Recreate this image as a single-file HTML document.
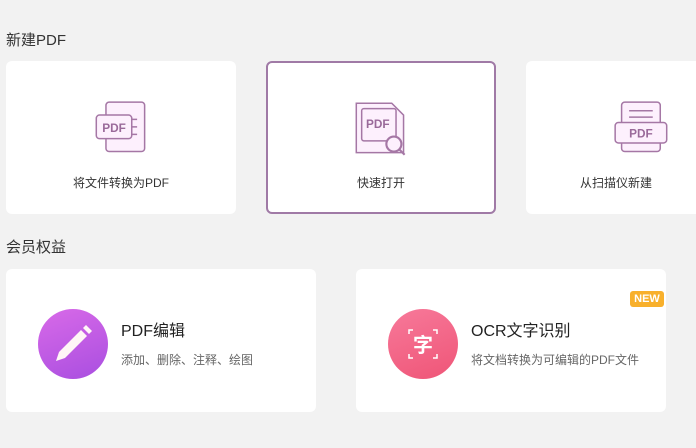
<!DOCTYPE html>
<html><head><meta charset="utf-8"><style>
*{margin:0;padding:0;box-sizing:border-box}
body{width:696px;height:448px;background:#f2f2f2;font-family:"Liberation Sans","Noto Sans CJK SC",sans-serif;position:relative;overflow:hidden;color:#333}
.h{position:absolute;left:6px;font-size:15px;color:#333}
.c{position:absolute;background:#fff;border-radius:6px}
.t{position:absolute;width:100%;text-align:center;top:113px;font-size:12px;color:#333}
.ic{position:absolute;top:40px;left:50%;margin-left:-29px}
.circ{position:absolute;left:32px;top:40px;width:70px;height:70px;border-radius:50%}
.tt{position:absolute;left:115px;top:48px;font-size:16px;color:#222}
.st{position:absolute;left:115px;top:82px;font-size:12px;color:#666}
</style></head><body>
<div class="h" style="top:29px">新建PDF</div>
<div class="c" style="left:6px;top:61px;width:230px;height:153px">
<svg class="ic" width="58" height="58" viewBox="0 0 54 54" style="top:39px"><rect x="13" y="2" width="36" height="46" rx="3" fill="#fdf0fd" stroke="#a577a5" stroke-width="1.4"/><rect x="4" y="14" width="33" height="22" rx="3" fill="#fdf0fd" stroke="#a577a5" stroke-width="1.4"/><text x="20.5" y="30" font-size="11" font-weight="bold" fill="#9a6a9a" text-anchor="middle" font-family="Liberation Sans">PDF</text><path d="M37 18h5M37 25h5M37 32h5" stroke="#a577a5" stroke-width="1.4"/></svg>
<div class="t">将文件转换为PDF</div></div>
<div class="c" style="left:266px;top:61px;width:230px;height:153px;border:2px solid #a07aa6">
<svg class="ic" width="58" height="58" viewBox="0 0 54 54" style="top:37px"><path d="M4 3h33l11 11v35H4z" fill="#fdf0fd" stroke="#a577a5" stroke-width="1.4"/><rect x="9" y="8" width="32" height="30" rx="2" fill="#fdf0fd" stroke="#a577a5" stroke-width="1.4"/><text x="24" y="26" font-size="11" font-weight="bold" fill="#9a6a9a" text-anchor="middle" font-family="Liberation Sans">PDF</text><circle cx="39" cy="41" r="7" fill="#fdf0fd" stroke="#a577a5" stroke-width="2"/><path d="M44 46l5 5" stroke="#a577a5" stroke-width="2"/></svg>
<div class="t" style="top:111px">快速打开</div></div>
<div class="c" style="left:526px;top:61px;width:230px;height:153px">
<svg class="ic" style="left:116px;top:39px" width="58" height="58" viewBox="0 0 54 54"><rect x="8" y="2" width="36" height="46" rx="3" fill="#fdf0fd" stroke="#a577a5" stroke-width="1.4"/><path d="M15 10h22M15 16h22" stroke="#a577a5" stroke-width="1.4"/><rect x="2" y="21" width="48" height="19" rx="3" fill="#fdf0fd" stroke="#a577a5" stroke-width="1.4"/><text x="26" y="35" font-size="11" font-weight="bold" fill="#9a6a9a" text-anchor="middle" font-family="Liberation Sans">PDF</text></svg>
<div class="t" style="left:-25px">从扫描仪新建</div></div>
<div class="h" style="top:236px">会员权益</div>
<div class="c" style="left:6px;top:269px;width:310px;height:143px">
<div class="circ" style="background:linear-gradient(160deg,#d86ae8,#a94ee0)"><svg width="70" height="70" viewBox="0 0 70 70"><path d="M43 21l6 6-22 22-9 3 3-9z" fill="#fff6f6"/><path d="M45 19l3-3 6 6-3 3z" fill="#fff6f6"/></svg></div>
<div class="tt">PDF编辑</div><div class="st">添加、删除、注释、绘图</div></div>
<div class="c" style="left:356px;top:269px;width:310px;height:143px">
<div class="circ" style="background:linear-gradient(160deg,#f7799a,#ef5577)"><svg width="70" height="70" viewBox="0 0 70 70"><path d="M21 25v-4h4M45 21h4v4M49 45v4h-4M25 49h-4v-4" stroke="#fff" stroke-width="1.5" fill="none"/><text x="35" y="43" font-size="20" font-weight="bold" fill="#fff" text-anchor="middle" font-family="Noto Sans CJK SC">字</text></svg></div>
<div class="tt">OCR文字识别</div><div class="st">将文档转换为可编辑的PDF文件</div>
<div style="position:absolute;left:274px;top:22px;width:34px;height:16px;background:#f8b02c;border-radius:3px;color:#fff;font-size:11px;font-weight:bold;text-align:center;line-height:16px">NEW</div></div>
</body></html>
